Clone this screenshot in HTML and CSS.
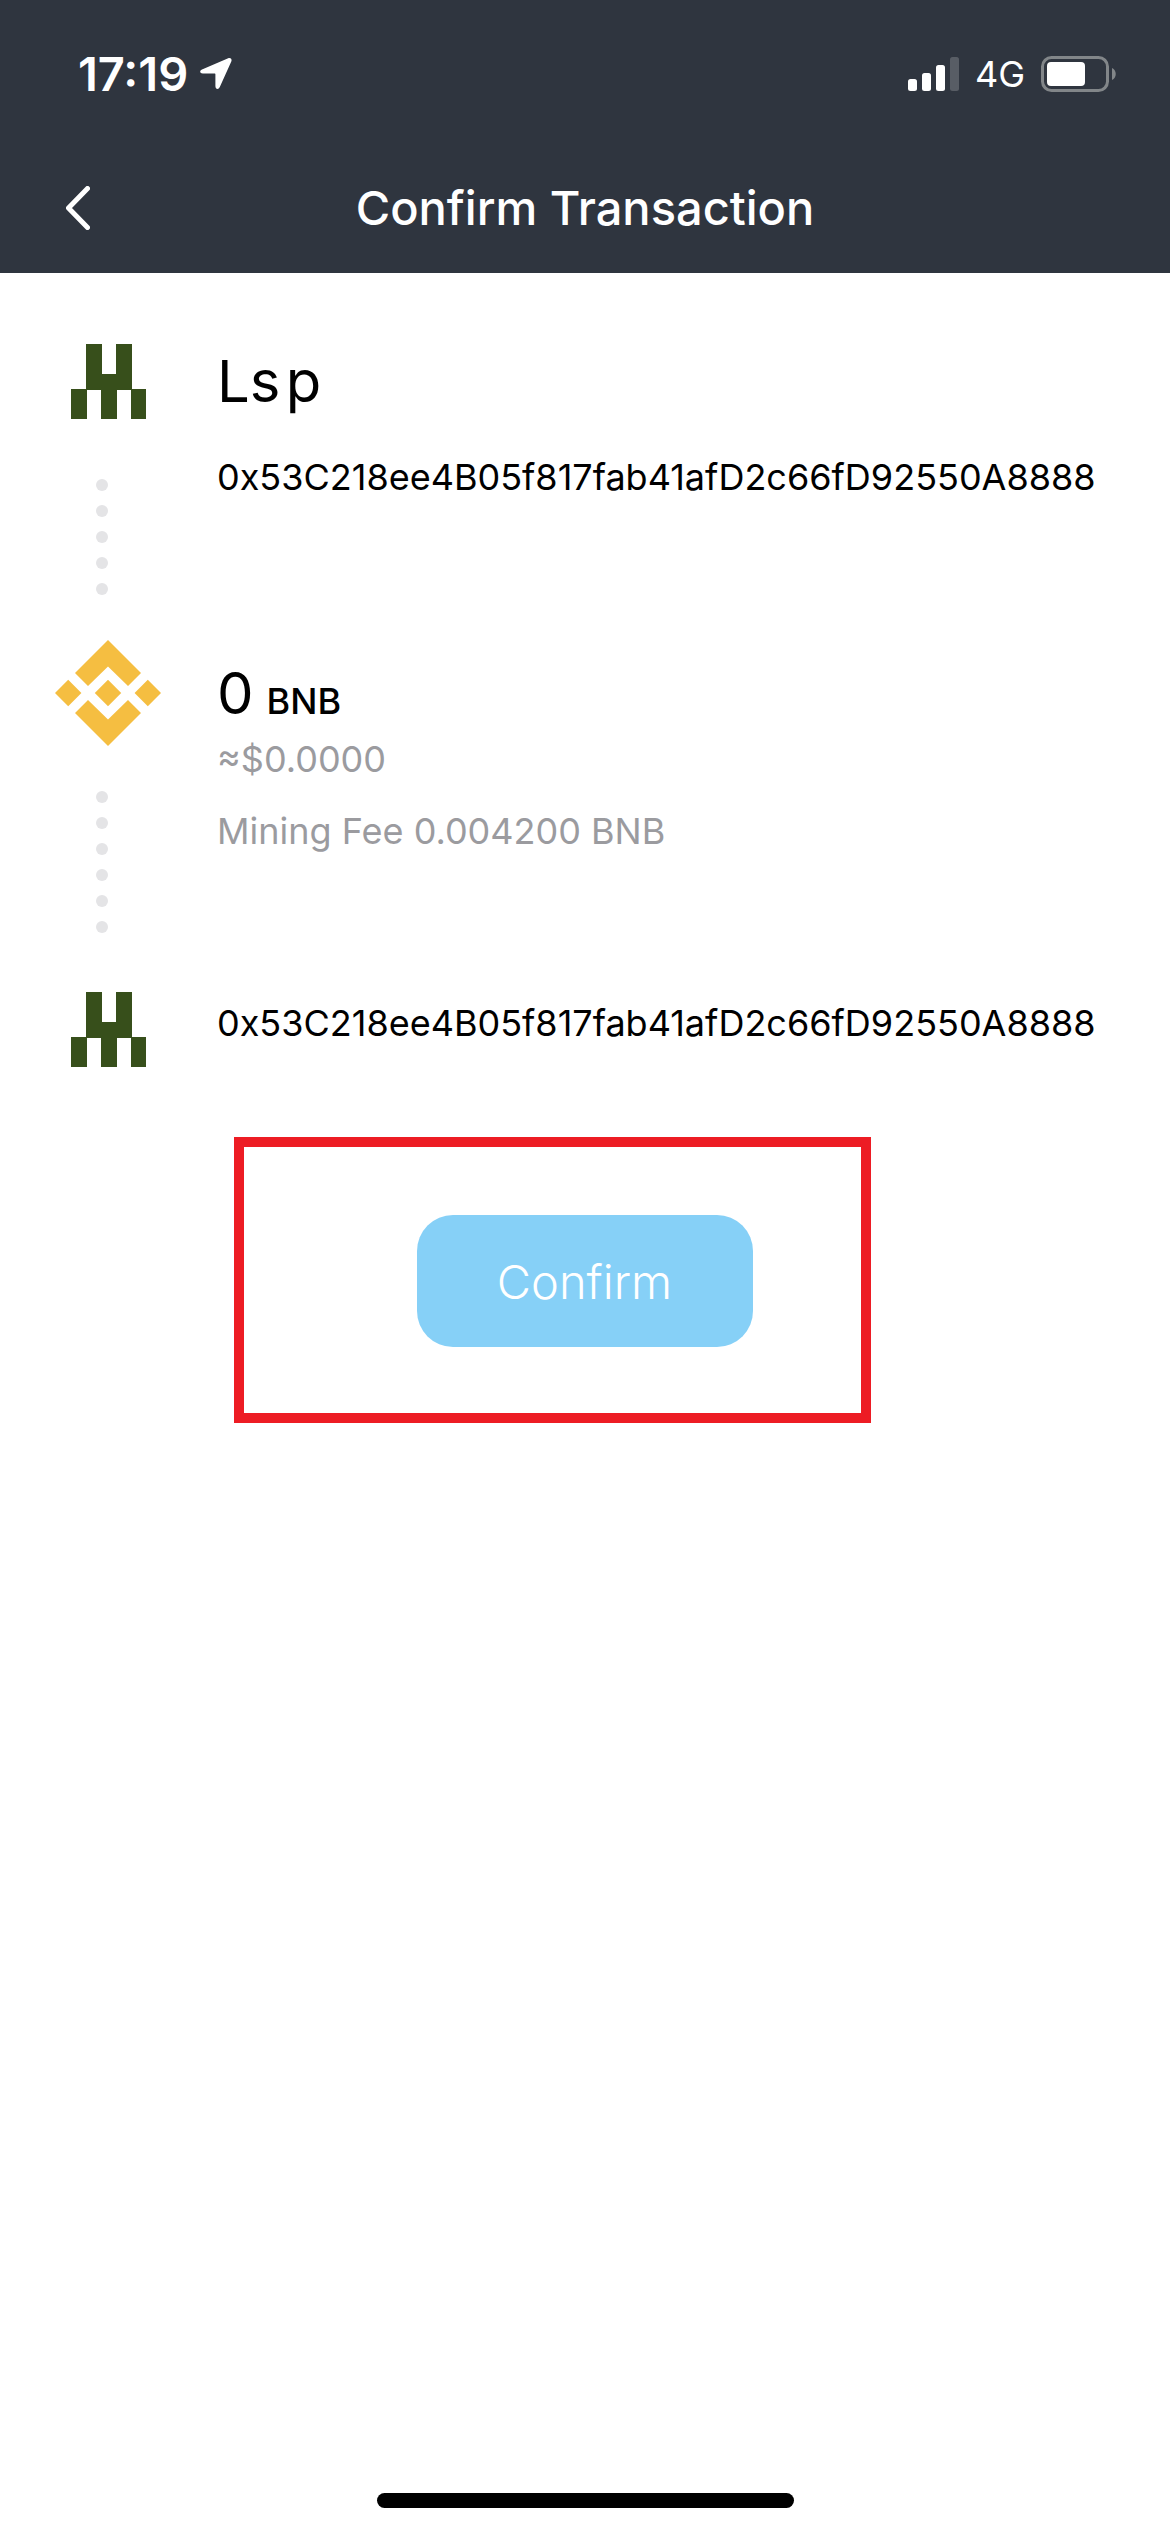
FILE: index.html
```html
<!DOCTYPE html>
<html lang="en">
<head>
<meta charset="utf-8">
<meta name="viewport" content="width=device-width, initial-scale=1">
<title>Confirm Transaction</title>
<link rel="stylesheet" href="styles.css">
</head>
<body>
<svg class="defs" aria-hidden="true">
  <symbol id="identicon" viewBox="0 0 75 75">
    <path fill="#374f1b" d="M15 0h16v30h14V0h16v45h14v30H60V46H46v29H30V46H16v29H0V45h15z"/>
  </symbol>
</svg>
<header class="top">
  <div class="status">
    <div class="status-left">
      <span class="time">17:19</span>
      <svg class="location" viewBox="0 0 32 34" aria-hidden="true"><path fill="#fff" d="M28.200 1.300 2 12.400c-2.800 1.200-2.200 4.200.8 4.200H14.600c.6 0 .8.200.8.800V29c0 3.400 3.100 3.900 4.400 1L31.300 4.400c1-2.200-.9-4-3.100-3.100z"/></svg>
    </div>
    <div class="status-right">
      <svg class="signal" viewBox="0 0 51 34" aria-hidden="true"><g fill="#fff"><rect y="22" width="9" height="12" rx="2.500"/><rect x="14" y="16" width="9" height="18" rx="2.500"/><rect x="28" y="8" width="9" height="26" rx="2.500"/><rect x="42" width="9" height="34" rx="2.500" opacity=".2"/></g></svg>
      <span class="network">4G</span>
      <svg class="battery" viewBox="0 0 75 36" aria-hidden="true"><rect x="1.500" y="1.500" width="65" height="33" rx="9" fill="none" stroke="#828689" stroke-width="3"/><rect x="6" y="6" width="38" height="24" rx="4" fill="#fff"/><path fill="#828689" d="M71 12c5 2 5 10 0 12z"/></svg>
    </div>
  </div>
  <nav class="bar">
    <button class="back" type="button" aria-label="Back"><svg viewBox="0 0 24 44" aria-hidden="true"><path d="M21.500 2.500 2.500 22l19 19.500" fill="none" stroke="#fff" stroke-width="5" stroke-linecap="round" stroke-linejoin="round"/></svg></button>
    <h1 class="title">Confirm Transaction</h1>
  </nav>
</header>
<main class="content">
  <section class="step">
    <div class="rail">
      <svg class="avatar" aria-hidden="true"><use href="#identicon"/></svg>
      <div class="dots dots-far"><i></i><i></i><i></i><i></i><i></i></div>
    </div>
    <div class="info info-from">
      <h2 class="name">Ls&#8202;p</h2>
      <p class="address">0x53C218ee4B05f817fab41afD2c66fD92550A8888</p>
    </div>
  </section>
  <section class="step">
    <div class="rail">
      <svg class="coin" viewBox="0 0 106 106" aria-hidden="true"><path fill="#f5be41" d="M53 0 86 33 73 46 53 26.500 33 46 20 33zM53 106 86 73 73 60 53 79.500 33 60 20 73zM13.200 39.800 26.400 53 13.200 66.200 0 53zM53 39.800 66.200 53 53 66.200 39.800 53zM92.800 39.800 106 53 92.800 66.200 79.600 53z"/></svg>
      <div class="dots"><i></i><i></i><i></i><i></i><i></i><i></i></div>
    </div>
    <div class="info info-amount">
      <p class="amount">0 <span class="unit">BNB</span></p>
      <p class="fiat">≈$0.0000</p>
      <p class="fee">Mining Fee 0.004200 BNB</p>
    </div>
  </section>
  <section class="step">
    <div class="rail">
      <svg class="avatar" aria-hidden="true"><use href="#identicon"/></svg>
    </div>
    <div class="info info-to">
      <p class="address">0x53C218ee4B05f817fab41afD2c66fD92550A8888</p>
    </div>
  </section>
  <div class="action">
    <button class="confirm" type="button">Confirm</button>
    <span class="highlight"></span>
  </div>
</main>
<footer class="home"><span class="home-bar"></span></footer>
</body>
</html>
```
FILE: styles.css
```css
* { box-sizing: border-box; }

body {
  margin: 0;
  min-height: 100vh;
  display: flex;
  flex-direction: column;
  background: #fff;
  color: #000;
  font-family: Inter, "Liberation Sans", sans-serif;
  font-size: 36px;
  line-height: 44px;
}

h1, h2, p { margin: 0; font-weight: 400; }
button { padding: 0; border: 0; font-family: inherit; color: #fff; }
svg { display: block; flex: none; }
.defs { position: absolute; width: 0; height: 0; }

/* Header */
.top { background: #2f353f; color: #fff; }
.status {
  display: flex;
  justify-content: space-between;
  align-items: center;
  height: 144px;
  padding: 4px 54px 0 78px;
}
.status-left, .status-right { display: flex; align-items: center; }
.status-left { gap: 12px; }
.time { font-size: 47px; font-weight: 600; }
.location { width: 32px; height: 34px; }
.status-right { gap: 16px; }
.signal { width: 51px; height: 34px; }
.network { font-size: 36px; }
.battery { width: 75px; height: 36px; }

.bar {
  display: grid;
  grid-template-columns: 96px 1fr 96px;
  align-items: center;
  height: 129px;
  padding-bottom: 2px;
}
.back { display: flex; justify-content: flex-end; padding-right: 6px; background: none; }
.back svg { width: 24px; height: 44px; }
.title { font-size: 47px; font-weight: 500; line-height: 58px; text-align: center; }

/* Transaction steps */
.content { flex: 1; padding: 71px 56px 0 55px; }
.step { display: grid; grid-template-columns: 106px 1fr; column-gap: 56px; }
.rail { display: flex; flex-direction: column; align-items: center; }
.avatar { width: 75px; height: 75px; }
.coin { width: 106px; height: 106px; }
.dots {
  display: flex;
  flex-direction: column;
  gap: 14px;
  padding: 45px 12px 59px 0;
}
.dots-far { padding-top: 60px; padding-bottom: 45px; }
.dots i { width: 12px; height: 12px; border-radius: 50%; background: #e4e4e6; }

.info { min-width: 0; }
.info-from { padding-top: 2px; }
.name, .amount { font-size: 58px; line-height: 70px; }
.name { margin-bottom: 39px; }
.info-amount { padding-top: 18px; }
.amount { display: flex; align-items: baseline; gap: 13px; }
.unit { font-size: 36px; font-weight: 500; line-height: 44px; }
.fiat, .fee { color: #9b9b9f; }
.fiat { margin: 9px 0 28px; }
.info-to { padding-top: 9px; }

/* Confirm button */
.action { position: relative; width: 336px; margin: 148px auto 0; }
.confirm {
  display: block;
  width: 100%;
  height: 132px;
  border-radius: 36px;
  background: #86d0f7;
  font-size: 47px;
  font-weight: 300;
}
.highlight {
  position: absolute;
  inset: -78px -118px -76px -183px;
  border: 10px solid #ed1c24;
  pointer-events: none;
}

.home { display: flex; justify-content: center; padding-bottom: 24px; }
.home-bar { width: 417px; height: 15px; border-radius: 8px; background: #000; }
```
